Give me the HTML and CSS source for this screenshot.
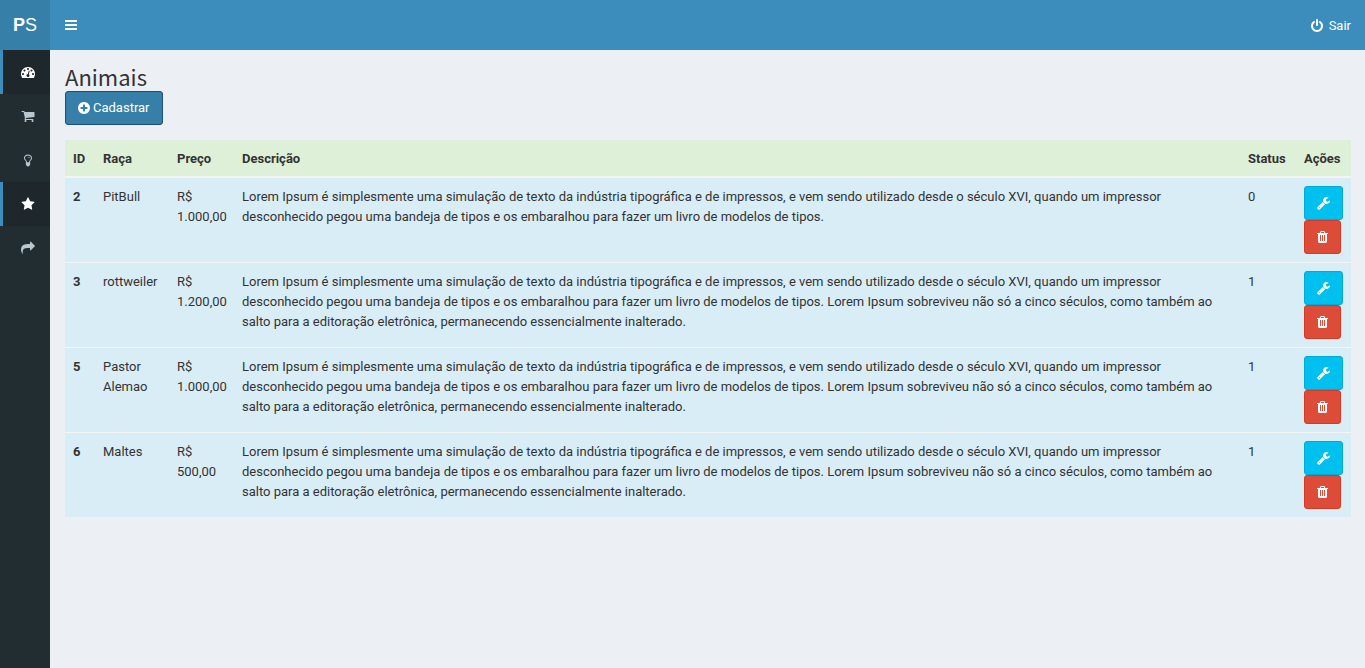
FILE: index.html
```html
<!DOCTYPE html>
<html lang="pt-BR">
<head>
<meta charset="utf-8">
<meta name="viewport" content="width=device-width, initial-scale=1">
<title>Animais</title>
<link rel="stylesheet" href="styles.css">
</head>
<body>
<svg class="sprite" aria-hidden="true">
  <symbol id="i-bars" viewBox="0 0 1536 1792"><path d="M1536 1344v128q0 26-19 45t-45 19h-1408q-26 0-45-19t-19-45v-128q0-26 19-45t45-19h1408q26 0 45 19t19 45zm0-512v128q0 26-19 45t-45 19h-1408q-26 0-45-19t-19-45v-128q0-26 19-45t45-19h1408q26 0 45 19t19 45zm0-512v128q0 26-19 45t-45 19h-1408q-26 0-45-19t-19-45v-128q0-26 19-45t45-19h1408q26 0 45 19t19 45z"/></symbol>
  <symbol id="i-dashboard" viewBox="0 0 1792 1792"><path d="M384 1152q0-53-37.5-90.5t-90.5-37.5-90.5 37.5-37.5 90.5 37.5 90.5 90.5 37.5 90.5-37.5 37.5-90.5zm192-448q0-53-37.5-90.5t-90.5-37.5-90.5 37.5-37.5 90.5 37.5 90.5 90.5 37.5 90.5-37.5 37.5-90.5zm428 481l101-382q6-26-7.5-48.5t-38.5-29.5-48 6.5-30 39.5l-101 382q-60 5-107 43.5t-63 98.5q-20 77 20 146t117 89 146-20 89-117q16-60-6-117t-72-91zm660-33q0-53-37.5-90.5t-90.5-37.5-90.5 37.5-37.5 90.5 37.5 90.5 90.5 37.5 90.5-37.5 37.5-90.5zm-640-640q0-53-37.5-90.5t-90.5-37.5-90.5 37.5-37.5 90.5 37.5 90.5 90.5 37.5 90.5-37.5 37.5-90.5zm448 192q0-53-37.5-90.5t-90.5-37.5-90.5 37.5-37.5 90.5 37.5 90.5 90.5 37.5 90.5-37.5 37.5-90.5zm320 448q0 261-141 483-19 29-54 29h-1402q-35 0-54-29-141-221-141-483 0-182 71-348t191-286 286-191 348-71 348 71 286 191 191 286 71 348z"/></symbol>
  <symbol id="i-cart" viewBox="0 0 1792 1792"><path d="M704 1536q0 52-38 90t-90 38-90-38-38-90 38-90 90-38 90 38 38 90zm896 0q0 52-38 90t-90 38-90-38-38-90 38-90 90-38 90 38 38 90zm128-1088v512q0 24-16.500 42.500t-40.500 21.500l-1044 122q13 60 13 70 0 16-24 64h920q26 0 45 19t19 45-19 45-45 19h-1024q-26 0-45-19t-19-45q0-11 8-31.500t16-36 21.500-40 15.500-29.500l-177-823h-204q-26 0-45-19t-19-45 19-45 45-19h256q16 0 28.500 6.500t19.500 15.500 13 24.500 8 26 5.500 29.500 4.500 26h1201q26 0 45 19t19 45z"/></symbol>
  <symbol id="i-bulb" viewBox="0 0 1792 1792"><path d="M1120 640q0 13-9.500 22.500t-22.500 9.500-22.500-9.500-9.500-22.500q0-46-54-71t-106-25q-13 0-22.500-9.500t-9.500-22.500 9.500-22.500 22.500-9.500q50 0 99.500 16t87 54 37.500 90zm160 0q0-72-34.500-134t-90-101.500-123-62-136.500-22.500-136.500 22.500-123 62-90 101.500-34.500 134q0 101 68 180 10 11 30.500 33t30.500 33q128 153 141 298h228q13-145 141-298 10-11 30.500-33t30.500-33q68-79 68-180zm128 0q0 155-103 268-45 49-74.500 87t-59.500 95.500-34 107.500q47 28 47 82 0 37-25 64 25 27 25 64 0 52-45 81 13 23 13 47 0 46-31.500 71t-77.500 25q-20 44-60 70t-87 26-87-26-60-70q-46 0-77.500-25t-31.500-71q0-24 13-47-45-29-45-81 0-37 25-64-25-27-25-64 0-54 47-82-4-50-34-107.500t-59.500-95.500-74.500-87q-103-113-103-268 0-99 44.500-184.500t117-142 164-89 186.500-32.500 186.500 32.500 164 89 117 142 44.500 184.500z"/></symbol>
  <symbol id="i-star" viewBox="0 0 1792 1792"><path d="M1728 647q0 22-26 48l-363 354 86 500q1 7 1 20 0 21-10.500 35.500t-30.500 14.500q-19 0-40-12l-449-236-449 236q-22 12-40 12-21 0-31.500-14.500t-10.500-35.500q0-6 2-20l86-500-364-354q-25-27-25-48 0-37 56-46l502-73 225-455q19-41 49-41t49 41l225 455 502 73q56 9 56 46z"/></symbol>
  <symbol id="i-share" viewBox="0 0 1792 1792"><path d="M1792 640q0 26-19 45l-512 512q-19 19-45 19t-45-19-19-45v-256h-224q-98 0-175.500 6t-154 21.500-133 42.500-105.500 69.500-80 101-48.500 138.500-17.500 181q0 55 5 123 0 6 2.500 23.500t2.500 26.500q0 15-8.500 25t-23.500 10q-16 0-28-17-7-9-13-22t-13.500-30-10.500-24q-127-285-127-451 0-199 53-333 162-403 875-403h224v-256q0-26 19-45t45-19 45 19l512 512q19 19 19 45z"/></symbol>
  <symbol id="i-power" viewBox="128 0 1536 1792"><path d="M1664 896q0 156-61 298t-164 245-245 164-298 61-298-61-245-164-164-245-61-298q0-182 80.500-343t226.500-270q43-32 95.500-25t83.500 50q32 42 24.500 94.500t-49.500 84.500q-98 74-151.500 181t-53.500 228q0 104 40.500 198.500t109.500 163.500 163.500 109.500 198.500 40.500 198.500-40.500 163.500-109.500 109.500-163.500 40.500-198.500q0-121-53.500-228t-151.500-181q-42-32-49.500-84.500t24.500-94.500q31-43 84-50t95 25q146 109 226.500 270t80.500 343zm-640-768v640q0 52-38 90t-90 38-90-38-38-90v-640q0-52 38-90t90-38 90 38 38 90z"/></symbol>
  <symbol id="i-plus" viewBox="128 0 1536 1792"><path d="M1344 960v-128q0-26-19-45t-45-19h-256v-256q0-26-19-45t-45-19h-128q-26 0-45 19t-19 45v256h-256q-26 0-45 19t-19 45v128q0 26 19 45t45 19h256v256q0 26 19 45t45 19h128q26 0 45-19t19-45v-256h256q26 0 45-19t19-45zm320-64q0 209-103 385.500t-279.500 279.500-385.500 103-385.500-103-279.500-279.500-103-385.500 103-385.500 279.500-279.500 385.500-103 385.500 103 279.500 279.500 103 385.500z"/></symbol>
  <symbol id="i-wrench" viewBox="64 0 1664 1792"><path d="M448 1472q0-26-19-45t-45-19-45 19-19 45 19 45 45 19 45-19 19-45zm644-420l-682 682q-37 37-90 37-52 0-91-37l-106-108q-38-36-38-90 0-53 38-91l681-681q39 98 114.500 173.500t173.500 114.500zm634-435q0 39-23 106-47 134-164.500 217.500t-258.500 83.500q-185 0-316.500-131.500t-131.500-316.500 131.500-316.500 316.500-131.500q58 0 121.500 16.500t107.500 46.500q16 11 16 28t-16 28l-293 169v224l193 107q5-3 79-48.500t135.500-81 70.500-35.500q15 0 23.500 10t8.500 25z"/></symbol>
  <symbol id="i-trash" viewBox="192 0 1408 1792"><path d="M704 1376v-704q0-14-9-23t-23-9h-64q-14 0-23 9t-9 23v704q0 14 9 23t23 9h64q14 0 23-9t9-23zm256 0v-704q0-14-9-23t-23-9h-64q-14 0-23 9t-9 23v704q0 14 9 23t23 9h64q14 0 23-9t9-23zm256 0v-704q0-14-9-23t-23-9h-64q-14 0-23 9t-9 23v704q0 14 9 23t23 9h64q14 0 23-9t9-23zm-544-992h448l-48-117q-7-9-17-11h-317q-10 2-17 11zm928 32v64q0 14-9 23t-23 9h-96v948q0 83-47 143.500t-113 60.500h-832q-66 0-113-58.500t-47-141.500v-952h-96q-14 0-23-9t-9-23v-64q0-14 9-23t23-9h309l70-167q15-37 54-63t79-26h320q40 0 79 26t54 63l70 167h309q14 0 23 9t9 23z"/></symbol>
</svg>

<header class="topbar">
  <a class="logo" href="#"><span><b>P</b>S</span></a>
  <button class="toggle" type="button" aria-label="Alternar menu"><svg class="icon icon-narrow"><use href="#i-bars"/></svg></button>
  <a class="logout" href="#"><svg class="icon icon-narrow"><use href="#i-power"/></svg>Sair</a>
</header>

<div class="shell">
  <nav class="sidebar" aria-label="Menu principal">
    <a class="nav-item active" href="#" aria-label="Painel"><svg class="icon"><use href="#i-dashboard"/></svg></a>
    <a class="nav-item" href="#" aria-label="Vendas"><svg class="icon"><use href="#i-cart"/></svg></a>
    <a class="nav-item" href="#" aria-label="Ideias"><svg class="icon"><use href="#i-bulb"/></svg></a>
    <a class="nav-item active" href="#" aria-label="Animais"><svg class="icon"><use href="#i-star"/></svg></a>
    <a class="nav-item" href="#" aria-label="Compartilhar"><svg class="icon"><use href="#i-share"/></svg></a>
  </nav>

  <main class="content">
    <h1 class="title">Animais</h1>
    <button class="btn btn-primary" type="button"><svg class="icon icon-narrow"><use href="#i-plus"/></svg>Cadastrar</button>

    <table class="table">
      <colgroup><col class="c-id"><col class="c-breed"><col class="c-price"><col><col class="c-status"><col class="c-actions"></colgroup>
      <thead>
        <tr><th scope="col">ID</th><th scope="col">Raça</th><th scope="col">Preço</th><th scope="col">Descrição</th><th scope="col">Status</th><th scope="col">Ações</th></tr>
      </thead>
      <tbody>
        <tr>
          <th scope="row">2</th><td>PitBull</td><td>R$ 1.000,00</td>
          <td>Lorem Ipsum é simplesmente uma simulação de texto da indústria tipográfica e de impressos, e vem sendo utilizado desde o século XVI, quando um impressor desconhecido pegou uma bandeja de tipos e os embaralhou para fazer um livro de modelos de tipos.</td>
          <td>0</td>
          <td class="actions-cell"><div class="actions"><button class="btn btn-info" type="button" aria-label="Editar"><svg class="icon icon-wrench"><use href="#i-wrench"/></svg></button><button class="btn btn-danger" type="button" aria-label="Excluir"><svg class="icon icon-trash"><use href="#i-trash"/></svg></button></div></td>
        </tr>
        <tr>
          <th scope="row">3</th><td>rottweiler</td><td>R$ 1.200,00</td>
          <td>Lorem Ipsum é simplesmente uma simulação de texto da indústria tipográfica e de impressos, e vem sendo utilizado desde o século XVI, quando um impressor desconhecido pegou uma bandeja de tipos e os embaralhou para fazer um livro de modelos de tipos. Lorem Ipsum sobreviveu não só a cinco séculos, como também ao salto para a editoração eletrônica, permanecendo essencialmente inalterado.</td>
          <td>1</td>
          <td class="actions-cell"><div class="actions"><button class="btn btn-info" type="button" aria-label="Editar"><svg class="icon icon-wrench"><use href="#i-wrench"/></svg></button><button class="btn btn-danger" type="button" aria-label="Excluir"><svg class="icon icon-trash"><use href="#i-trash"/></svg></button></div></td>
        </tr>
        <tr>
          <th scope="row">5</th><td>Pastor Alemao</td><td>R$ 1.000,00</td>
          <td>Lorem Ipsum é simplesmente uma simulação de texto da indústria tipográfica e de impressos, e vem sendo utilizado desde o século XVI, quando um impressor desconhecido pegou uma bandeja de tipos e os embaralhou para fazer um livro de modelos de tipos. Lorem Ipsum sobreviveu não só a cinco séculos, como também ao salto para a editoração eletrônica, permanecendo essencialmente inalterado.</td>
          <td>1</td>
          <td class="actions-cell"><div class="actions"><button class="btn btn-info" type="button" aria-label="Editar"><svg class="icon icon-wrench"><use href="#i-wrench"/></svg></button><button class="btn btn-danger" type="button" aria-label="Excluir"><svg class="icon icon-trash"><use href="#i-trash"/></svg></button></div></td>
        </tr>
        <tr>
          <th scope="row">6</th><td>Maltes</td><td>R$ 500,00</td>
          <td>Lorem Ipsum é simplesmente uma simulação de texto da indústria tipográfica e de impressos, e vem sendo utilizado desde o século XVI, quando um impressor desconhecido pegou uma bandeja de tipos e os embaralhou para fazer um livro de modelos de tipos. Lorem Ipsum sobreviveu não só a cinco séculos, como também ao salto para a editoração eletrônica, permanecendo essencialmente inalterado.</td>
          <td>1</td>
          <td class="actions-cell"><div class="actions"><button class="btn btn-info" type="button" aria-label="Editar"><svg class="icon icon-wrench"><use href="#i-wrench"/></svg></button><button class="btn btn-danger" type="button" aria-label="Excluir"><svg class="icon icon-trash"><use href="#i-trash"/></svg></button></div></td>
        </tr>
      </tbody>
    </table>
  </main>
</div>
</body>
</html>
```
FILE: styles.css
```css
* { box-sizing: border-box; }

body {
  margin: 0;
  min-height: 100vh;
  display: flex;
  flex-direction: column;
  background: #ecf0f5;
  color: #333;
  font: 13px/20px Roboto, "Liberation Sans", sans-serif;
}

a { color: inherit; text-decoration: none; }
button { font: inherit; cursor: pointer; }

.sprite { display: none; }
.icon { width: 14px; height: 14px; fill: currentColor; flex: none; }
.icon-narrow { width: 12px; }
.icon-wrench { width: 13px; }
.icon-trash { width: 11px; }

.topbar {
  display: flex;
  height: 50px;
  background: #3c8dbc;
  color: #fff;
}

.logo {
  display: flex;
  align-items: center;
  justify-content: center;
  width: 50px;
  background: #367fa9;
  font: 18px/50px "Liberation Sans", sans-serif;
}

.toggle {
  display: flex;
  align-items: center;
  padding: 0 15px;
  border: 0;
  background: none;
  color: inherit;
}

.logout {
  display: flex;
  align-items: center;
  gap: 6px;
  margin-left: auto;
  padding: 1px 14px 0;
}

.shell { display: flex; flex: 1; }

.sidebar { width: 50px; flex: none; background: #222d32; }

.nav-item {
  display: flex;
  align-items: center;
  justify-content: center;
  height: 44px;
  padding-left: 3px;
  border-left: 3px solid transparent;
  color: #b8c7ce;
}

.nav-item.active {
  border-left-color: #3c8dbc;
  background: #1e282c;
  color: #fff;
}

.content { flex: 1; min-width: 0; padding: 15px 14px 15px 15px; }

.title {
  margin: 0 0 4px;
  font: 22px/22px "Noto Sans CJK JP", "Open Sans", sans-serif;
}

.btn {
  display: flex;
  align-items: center;
  gap: 3px;
  height: 34px;
  padding: 0 12px;
  border: 1px solid;
  border-radius: 3px;
  color: #fff;
}

.btn-primary { background: #367fa9; border-color: #204d74; }
.btn-info { background: #00c0ef; border-color: #00acd6; }
.btn-danger { background: #dd4b39; border-color: #d73925; }

.actions { display: flex; flex-direction: column; align-items: flex-start; }

.table {
  width: 100%;
  margin-top: 15px;
  border-collapse: collapse;
  table-layout: fixed;
}

.table th, .table td { padding: 9px 8px 7px; text-align: left; vertical-align: top; }
.table .actions-cell { padding: 8px; }
.table thead th { background: #dff0d8; border-bottom: 2px solid #f4f4f4; }
.table tbody tr { background: #d9edf7; }
.table tbody tr + tr { border-top: 1px solid #f4f4f4; }

.c-id { width: 30px; }
.c-breed { width: 74px; }
.c-price { width: 65px; }
.c-status { width: 56px; }
.c-actions { width: 55px; }
```
